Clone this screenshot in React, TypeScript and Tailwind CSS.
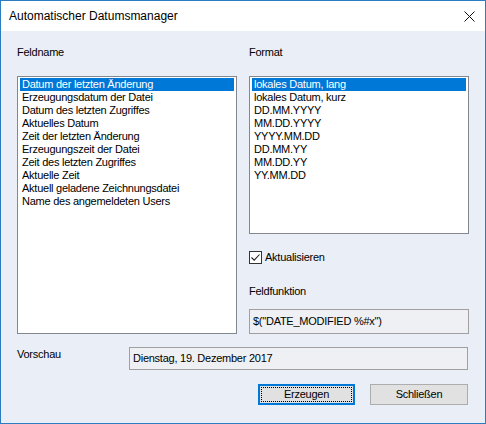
import React from "react";

const fields = [
  "Datum der letzten Änderung",
  "Erzeugungsdatum der Datei",
  "Datum des letzten Zugriffes",
  "Aktuelles Datum",
  "Zeit der letzten Änderung",
  "Erzeugungszeit der Datei",
  "Zeit des letzten Zugriffes",
  "Aktuelle Zeit",
  "Aktuell geladene Zeichnungsdatei",
  "Name des angemeldeten Users",
];

const formats = [
  "lokales Datum, lang",
  "lokales Datum, kurz",
  "DD.MM.YYYY",
  "MM.DD.YYYY",
  "YYYY.MM.DD",
  "DD.MM.YY",
  "MM.DD.YY",
  "YY.MM.DD",
];

function ListBox({ items, height }: { items: string[]; height: string }) {
  return (
    <div className={`border border-[#828790] bg-white px-[2px] pt-[1px] ${height}`}>
      {items.map((t, i) => (
        <div
          key={t}
          className={`h-[13px] leading-[13px] pl-[2px] whitespace-nowrap ${
            i === 0 ? "bg-[#0078d7] text-white" : "text-black"
          }`}
        >
          {t}
        </div>
      ))}
    </div>
  );
}

export default function App() {
  return (
    <div
      className="w-[486px] h-[424px] flex flex-col border border-[#2b7cc0] bg-[#e9eef7] text-[11px] tracking-[-0.25px] text-black"
      style={{ fontFamily: '"Liberation Sans", Arial, sans-serif' }}
    >
      {/* title bar */}
      <div className="h-[30px] bg-white flex items-center justify-between pl-[8px] pr-[9px]">
        <span className="text-[12px] tracking-normal">Automatischer Datumsmanager</span>
        <svg width="11" height="11" viewBox="0 0 11 11" className="mr-[1px]">
          <path d="M0.5 0.5 L10.5 10.5 M10.5 0.5 L0.5 10.5" stroke="#111" strokeWidth="1" fill="none" />
        </svg>
      </div>

      <div className="flex-1 flex flex-col pl-[16px] pr-[16px] pt-[15px]">
        <div className="flex gap-[12px]">
          <div className="w-[220px] flex flex-col">
            <div className="h-[13px] leading-[13px]">Feldname</div>
            <div className="mt-[17px]">
              <ListBox items={fields} height="h-[258px]" />
            </div>
          </div>

          <div className="w-[220px] flex flex-col">
            <div className="h-[13px] leading-[13px]">Format</div>
            <div className="mt-[17px]">
              <ListBox items={formats} height="h-[158px]" />
            </div>
            <div className="mt-[17px] h-[13px] flex items-center">
              <span className="w-[13px] h-[13px] border border-[#333] bg-white flex items-center justify-center">
                <svg width="11" height="11" viewBox="0 0 11 11">
                  <path d="M1.5 5.5 L4.2 8.2 L9.5 2.5" stroke="#222" strokeWidth="1.1" fill="none" />
                </svg>
              </span>
              <span className="ml-[3px] leading-[13px]">Aktualisieren</span>
            </div>
            <div className="mt-[21px] h-[13px] leading-[13px]">Feldfunktion</div>
            <div className="mt-[11px] h-[25px] border border-[#a0a0a0] bg-[#eef0f3] flex items-center pl-[3px]">
              $("DATE_MODIFIED %#x")
            </div>
          </div>
        </div>

        <div className="mt-[13px] flex items-start mr-[1px]">
          <div className="w-[112px] mt-[1px] leading-[13px]">Vorschau</div>
          <div className="flex-1 h-[23px] border border-[#a0a0a0] bg-[#eef0f3] flex items-center pl-[3px]">
            Dienstag, 19. Dezember 2017
          </div>
        </div>

        <div className="mt-[14px] flex justify-end gap-[15px] mr-[1px]">
          <button className="w-[97px] h-[21px] border-2 border-[#0078d7] bg-[#e1e1e1] p-[1px] text-[11px]">
            <span className="w-full h-full flex items-center justify-center border border-dotted border-black">
              Erzeugen
            </span>
          </button>
          <button className="w-[98px] h-[21px] border border-[#adadad] bg-[#e1e1e1] flex items-center justify-center text-[11px]">
            Schließen
          </button>
        </div>
      </div>
    </div>
  );
}
